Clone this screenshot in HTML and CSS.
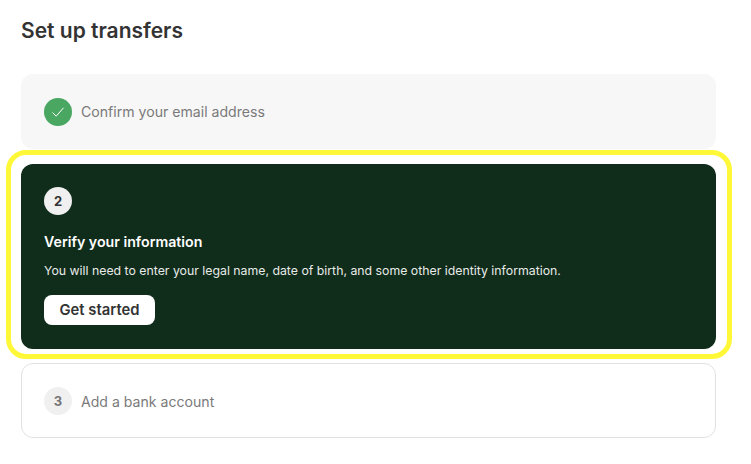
FILE: index.html
```html
<!DOCTYPE html>
<html>
<head>
    <meta charset="utf-8">
    <link rel="stylesheet" href="styles.css">
</head>
<body>
    <h1 class="title">Set up transfers</h1>

    <div class="step step-done">
        <span class="badge badge-done">
            <svg width="14" height="14" viewBox="0 0 14 14" fill="none">
                <path d="M1.5 7.5L5.2 11.2L12.5 2.8" stroke="#fff" stroke-width="1"/>
            </svg>
        </span>
        <span class="step-label">Confirm your email address</span>
    </div>

    <div class="highlight">
        <div class="step-active">
            <span class="badge badge-light">2</span>
            <h2 class="active-title">Verify your information</h2>
            <p class="active-text">You will need to enter your legal name, date of birth, and some other identity information.</p>
            <button class="start-btn">Get started</button>
        </div>
    </div>

    <div class="step step-todo">
        <span class="badge badge-muted">3</span>
        <span class="step-label">Add a bank account</span>
    </div>
</body>
</html>
```

FILE: styles.css
```css
* {
    box-sizing: border-box;
}

body {
    margin: 0;
    padding: 0 35px 0 21px;
    font-family: Inter, 'Noto Sans', sans-serif;
    background: #fff;
}

.title {
    margin: 0;
    padding-top: 18px;
    height: 74px;
    font-size: 21px;
    line-height: 26px;
    font-weight: 600;
    color: #333;
}

.step {
    display: flex;
    align-items: center;
    gap: 9px;
    height: 75px;
    padding: 0 23px;
    border-radius: 12px;
}

.step-done {
    background: #f7f7f7;
    margin-bottom: 1px;
}

.step-todo {
    height: 75px;
    margin-top: 4px;
    padding: 1px 22px 0;
    border: 1px solid #e2e2e2;
}

.step-label {
    font-size: 14.1px;
    color: #7a7a7a;
}

.badge {
    display: flex;
    align-items: center;
    justify-content: center;
    flex-shrink: 0;
    width: 28px;
    height: 28px;
    border-radius: 50%;
    font-size: 13px;
    font-weight: 700;
}

.badge-done {
    background: #4aa762;
}

.badge-light {
    background: #f0f0f0;
    color: #333;
}

.badge-muted {
    background: #f0f0f0;
    color: #757575;
}

.highlight {
    margin: 0 -16px 0 -15px;
    padding: 9px 11px 5px 10px;
    border: 5px solid #fff838;
    border-radius: 20px;
}

.step-active {
    height: 185px;
    padding: 23px 23px 0;
    background: #102c1a;
    border-radius: 12px;
    color: #fff;
}

.active-title {
    margin: 17px 0 0;
    font-size: 14.2px;
    line-height: 20px;
    font-weight: 600;
}

.active-text {
    margin: 10px 0 0;
    font-size: 12.3px;
    line-height: 18px;
    color: #e8ebe9;
}

.start-btn {
    display: block;
    margin-top: 15px;
    width: 111px;
    height: 30px;
    padding: 0;
    border: none;
    border-radius: 8px;
    background: #fff;
    color: #333;
    font-family: inherit;
    font-size: 14.8px;
    font-weight: 600;
}
```
